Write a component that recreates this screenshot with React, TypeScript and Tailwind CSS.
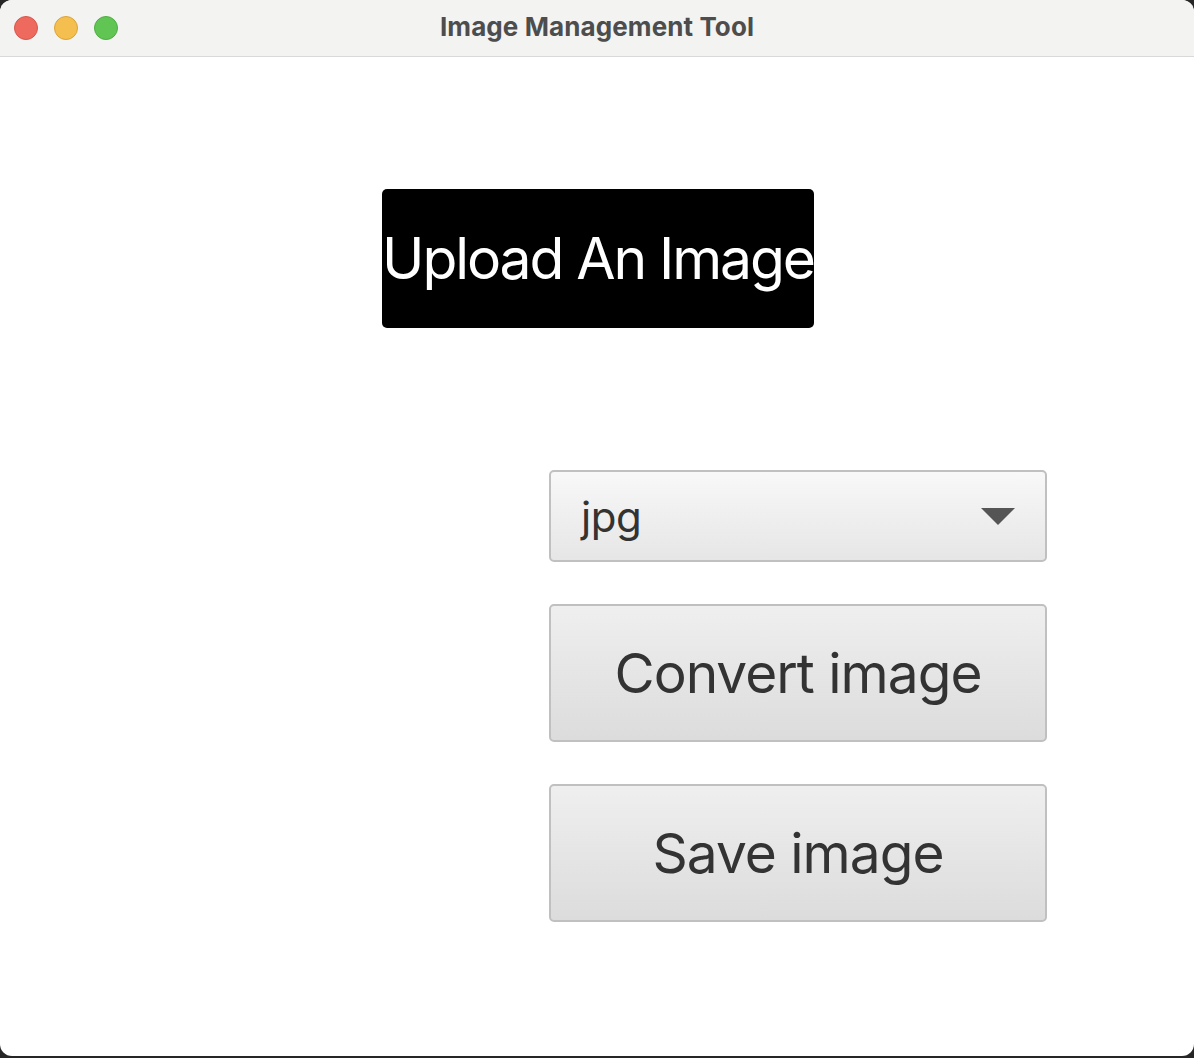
import React from "react";

export default function App() {
  return (
    <div className="w-[1194px] h-[1058px] bg-[#262626] overflow-hidden">
      <div className="w-[1194px] h-[1056px] bg-white rounded-[12px] overflow-hidden flex flex-col">
        {/* title bar */}
        <div className="relative h-[57px] bg-[#f3f3f2] border-b border-[#d9d9d9] flex items-center justify-center shrink-0">
          <div className="absolute left-[14px] top-[16px] flex gap-[16px]">
            <span className="w-[24px] h-[24px] rounded-full bg-[#ee6a5e] border border-[#d5564b]" />
            <span className="w-[24px] h-[24px] rounded-full bg-[#f5bf4f] border border-[#d9a33a]" />
            <span className="w-[24px] h-[24px] rounded-full bg-[#61c554] border border-[#4ead42]" />
          </div>
          <span className="font-['Inter',sans-serif] font-bold text-[26px] text-[#4d4d4d] tracking-[0.1px] leading-none mt-[-2px]">
            Image Management Tool
          </span>
        </div>

        {/* body */}
        <div className="flex flex-col items-center font-['Inter',sans-serif]">
          <div className="mt-[132px] ml-[2px] w-[432px] h-[139px] bg-black rounded-[5px] flex items-center justify-center">
            <span className="text-white text-[57px] leading-none tracking-[-2.1px] whitespace-nowrap">
              Upload An Image
            </span>
          </div>

          <div className="mt-[142px] ml-[402px] w-[498px] flex flex-col gap-[42px]">
            <div className="h-[92px] rounded-[5px] border-2 border-[#c0c0c0] bg-gradient-to-b from-[#f8f8f8] to-[#e6e6e6] flex items-center justify-between pl-[30px] pr-[30px]">
              <span className="text-[42px] text-[#333333] leading-none mt-[2px] tracking-[-0.5px]">jpg</span>
              <svg width="34" height="17" viewBox="0 0 34 17">
                <polygon points="0,0 34,0 17,17" fill="#555555" />
              </svg>
            </div>
            <div className="h-[138px] rounded-[5px] border-2 border-[#c0c0c0] bg-gradient-to-b from-[#efefef] to-[#dcdcdc] flex items-center justify-center">
              <span className="text-[55px] text-[#333333] leading-none tracking-[-1px]">Convert image</span>
            </div>
            <div className="h-[138px] rounded-[5px] border-2 border-[#c0c0c0] bg-gradient-to-b from-[#efefef] to-[#dcdcdc] flex items-center justify-center">
              <span className="text-[55px] text-[#333333] leading-none tracking-[-1px]">Save image</span>
            </div>
          </div>
        </div>
      </div>
    </div>
  );
}
